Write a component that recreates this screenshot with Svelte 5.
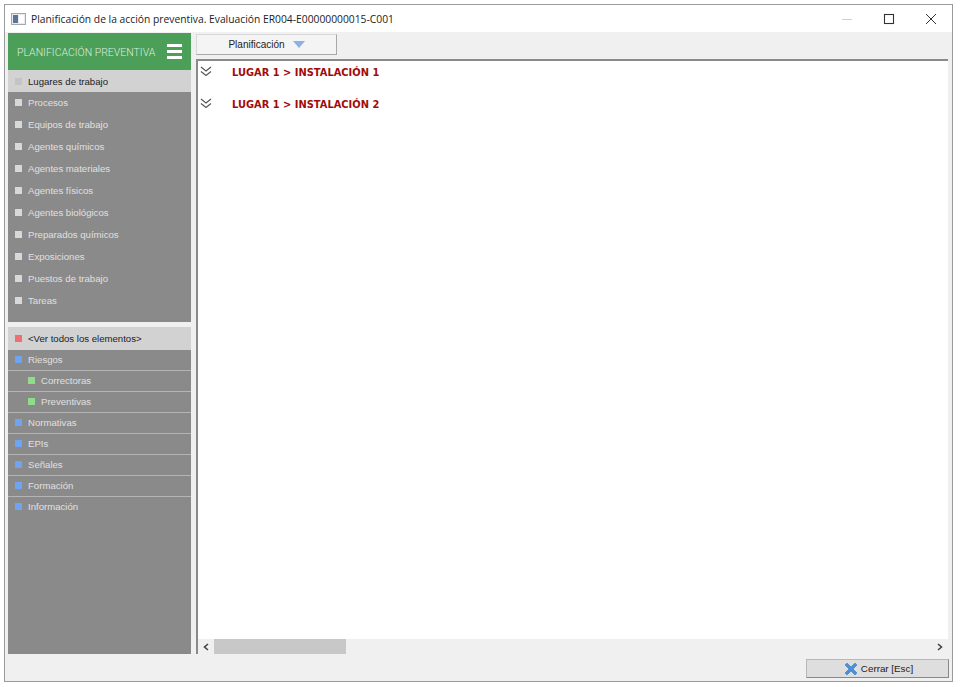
<script>
  const top = ['Procesos','Equipos de trabajo','Agentes químicos','Agentes materiales','Agentes físicos','Agentes biológicos','Preparados químicos','Exposiciones','Puestos de trabajo','Tareas'];
  const bottom = [
    {t:'Riesgos',c:'blue'},{t:'Correctoras',c:'green',sub:true},{t:'Preventivas',c:'green',sub:true},
    {t:'Normativas',c:'blue'},{t:'EPIs',c:'blue'},{t:'Señales',c:'blue'},{t:'Formación',c:'blue'},{t:'Información',c:'blue'}
  ];
  const groups = ['LUGAR 1 > INSTALACIÓN 1','LUGAR 1 > INSTALACIÓN 2'];
</script>

<div class="page">
  <div class="window">
    <header class="titlebar">
      <svg class="appicon" width="16" height="14" viewBox="0 0 16 14">
        <rect x="0.5" y="1.5" width="14" height="11" fill="#e8eaee" stroke="#a4a8b0"/>
        <rect x="2" y="3" width="5" height="8" fill="#5a7596"/>
        <rect x="8" y="3" width="5" height="8" fill="#fff"/>
      </svg>
      <span class="title">Planificación de la acción preventiva. Evaluación ER004-E00000000015-C001</span>
      <div class="winbtns">
        <svg width="12" height="12" viewBox="0 0 12 12"><path d="M1 6.5h10" stroke="#d0d0d0"/></svg>
        <svg width="12" height="12" viewBox="0 0 12 12"><rect x="1.5" y="1.5" width="9" height="9" fill="none" stroke="#333" stroke-width="1.1"/></svg>
        <svg width="12" height="12" viewBox="0 0 12 12"><path d="M1 1l10 10M11 1L1 11" stroke="#333" stroke-width="1"/></svg>
      </div>
    </header>

    <div class="body">
      <aside class="side">
        <section class="panel top">
          <div class="brand">
            <span>PLANIFICACIÓN PREVENTIVA</span>
            <div class="burger"><i></i><i></i><i></i></div>
          </div>
          <div class="row active"><b class="dot pale"></b>Lugares de trabajo</div>
          {#each top as t}
            <div class="row"><b class="dot grey"></b>{t}</div>
          {/each}
        </section>
        <section class="panel bottom">
          <div class="row2 active"><b class="dot red"></b>&lt;Ver todos los elementos&gt;</div>
          {#each bottom as it}
            <div class="row2 line" class:sub={it.sub}><b class="dot {it.c}"></b>{it.t}</div>
          {/each}
        </section>
      </aside>

      <main class="main">
        <div class="toolbar">
          <div class="tab">Planificación
            <svg width="12" height="7" viewBox="0 0 12 7"><path d="M0 0h12L6 7z" fill="#8fb0e0"/></svg>
          </div>
        </div>
        <div class="content">
          <div class="list">
            {#each groups as g}
              <div class="group">
                <svg width="12" height="11" viewBox="0 0 12 11" fill="none" stroke="#555" stroke-width="1.2"><path d="M1 1l5 4 5-4M1 5.5l5 4 5-4"/></svg>
                <span>{g}</span>
              </div>
            {/each}
          </div>
          <div class="hscroll">
            <svg class="arr" width="6" height="8" viewBox="0 0 6 8" fill="none" stroke="#444" stroke-width="1.6"><path d="M5 1L1.5 4 5 7"/></svg>
            <div class="track"><div class="thumb"></div></div>
            <svg class="arr" width="6" height="8" viewBox="0 0 6 8" fill="none" stroke="#444" stroke-width="1.6"><path d="M1 1l3.5 3L1 7"/></svg>
          </div>
        </div>
      </main>
    </div>

    <footer class="footer">
      <button class="close">
        <svg width="14" height="14" viewBox="0 0 14 14"><path d="M1 3l2-2 4 4 4-4 2 2-4 4 4 4-2 2-4-4-4 4-2-2 4-4z" fill="#4a90d9" stroke="#2f6fb5" stroke-width=".5"/></svg>
        Cerrar [Esc]
      </button>
    </footer>
  </div>
</div>

<style>
  :global(body){margin:0;background:#fff;}
  .page{width:960px;height:687px;padding:4px 7px 5px 4px;box-sizing:border-box;font-family:"Liberation Sans",Arial,sans-serif;}
  .window{height:100%;box-sizing:border-box;border:1px solid #9a9a9a;background:#f0f0f0;display:flex;flex-direction:column;}
  .titlebar{height:27px;background:#fff;display:flex;align-items:center;padding-left:6px;flex:none;}
  .appicon{margin-right:4px;}
  .title{font:10.3px "Open Sans",sans-serif;color:#222;white-space:nowrap;}
  .winbtns{margin-left:auto;display:flex;gap:30px;padding-right:15px;}
  .body{flex:1;display:flex;min-height:0;padding:1px 0 0 3px;}
  .side{width:183px;display:flex;flex-direction:column;gap:5px;flex:none;}
  .panel{background:#8a8a8a;}
  .top{height:289px;}
  .bottom{height:327px;}
  .brand{height:37px;background:#4c9f58;color:#dbeedd;display:flex;align-items:center;padding:2px 9px 0 9px;box-sizing:border-box;font:300 10.5px Roboto,sans-serif;justify-content:space-between;white-space:nowrap;}
  .burger{width:15px;display:flex;flex-direction:column;gap:3px;margin-top:-2px;}
  .burger i{display:block;height:3px;background:#fff;}
  .row{height:22px;display:flex;align-items:center;padding:0 0 2px 7px;box-sizing:border-box;font-size:9.6px;color:#e0e0e0;}
  .row2{height:21px;display:flex;align-items:center;padding:0 0 2px 7px;font-size:9.6px;color:#e0e0e0;box-sizing:border-box;}
  .row2.line{border-bottom:1px solid #b4b4b4;}
  .row2.line:last-child{border-bottom:none;}
  .row2.sub{padding-left:20px;}
  .row.active{background:#d2d2d2;color:#222;padding-bottom:0;}
  .row2.active{background:#d2d2d2;color:#222;height:23px;padding-bottom:1px;}
  .dot{width:7px;height:7px;margin-right:6px;flex:none;}
  .grey{background:#d8d8d8;}
  .pale{background:#c4c4c4;}
  .red{background:#ec7070;}
  .blue{background:#6fa4f0;}
  .green{background:#8fdc8a;}
  .main{flex:1;display:flex;flex-direction:column;margin-left:5px;min-width:0;padding-right:4px;}
  .toolbar{height:26px;flex:none;padding-top:1px;box-sizing:border-box;}
  .tab{width:141px;height:21px;box-sizing:border-box;background:#f4f4f4;border:1px solid #d8d8d8;border-right-color:#a8a8a8;border-bottom-color:#a8a8a8;display:flex;align-items:center;justify-content:center;gap:8px;font-size:10px;color:#222;}
  .content{flex:1;min-height:0;background:#fff;border-top:2px solid #8a8a8a;border-left:2px solid #8a8a8a;display:flex;flex-direction:column;}
  .list{flex:1;padding-top:4px;}
  .group{height:32px;display:flex;align-items:flex-start;padding-left:2px;gap:20px;}
  .group svg{margin-top:1px;}
  .group span{color:#a00c0c;font:bold 9.9px/12px "DejaVu Sans",sans-serif;margin-top:2px;}
  .hscroll{height:15px;background:#f0f0f0;display:flex;align-items:center;padding:0 5px;gap:5px;flex:none;}
  .track{flex:1;height:15px;}
  .thumb{width:132px;height:100%;background:#c8c8c8;}
  .footer{height:27px;flex:none;display:flex;justify-content:flex-end;padding:5px 3px 0 0;box-sizing:border-box;}
  .close{width:143px;height:19px;padding:0 0 0 2px;background:#dedede;border:1px solid #b8b8b8;border-right-color:#888;border-bottom-color:#888;display:flex;align-items:center;justify-content:center;gap:3px;font:9.8px "Liberation Sans",sans-serif;color:#222;}
</style>
